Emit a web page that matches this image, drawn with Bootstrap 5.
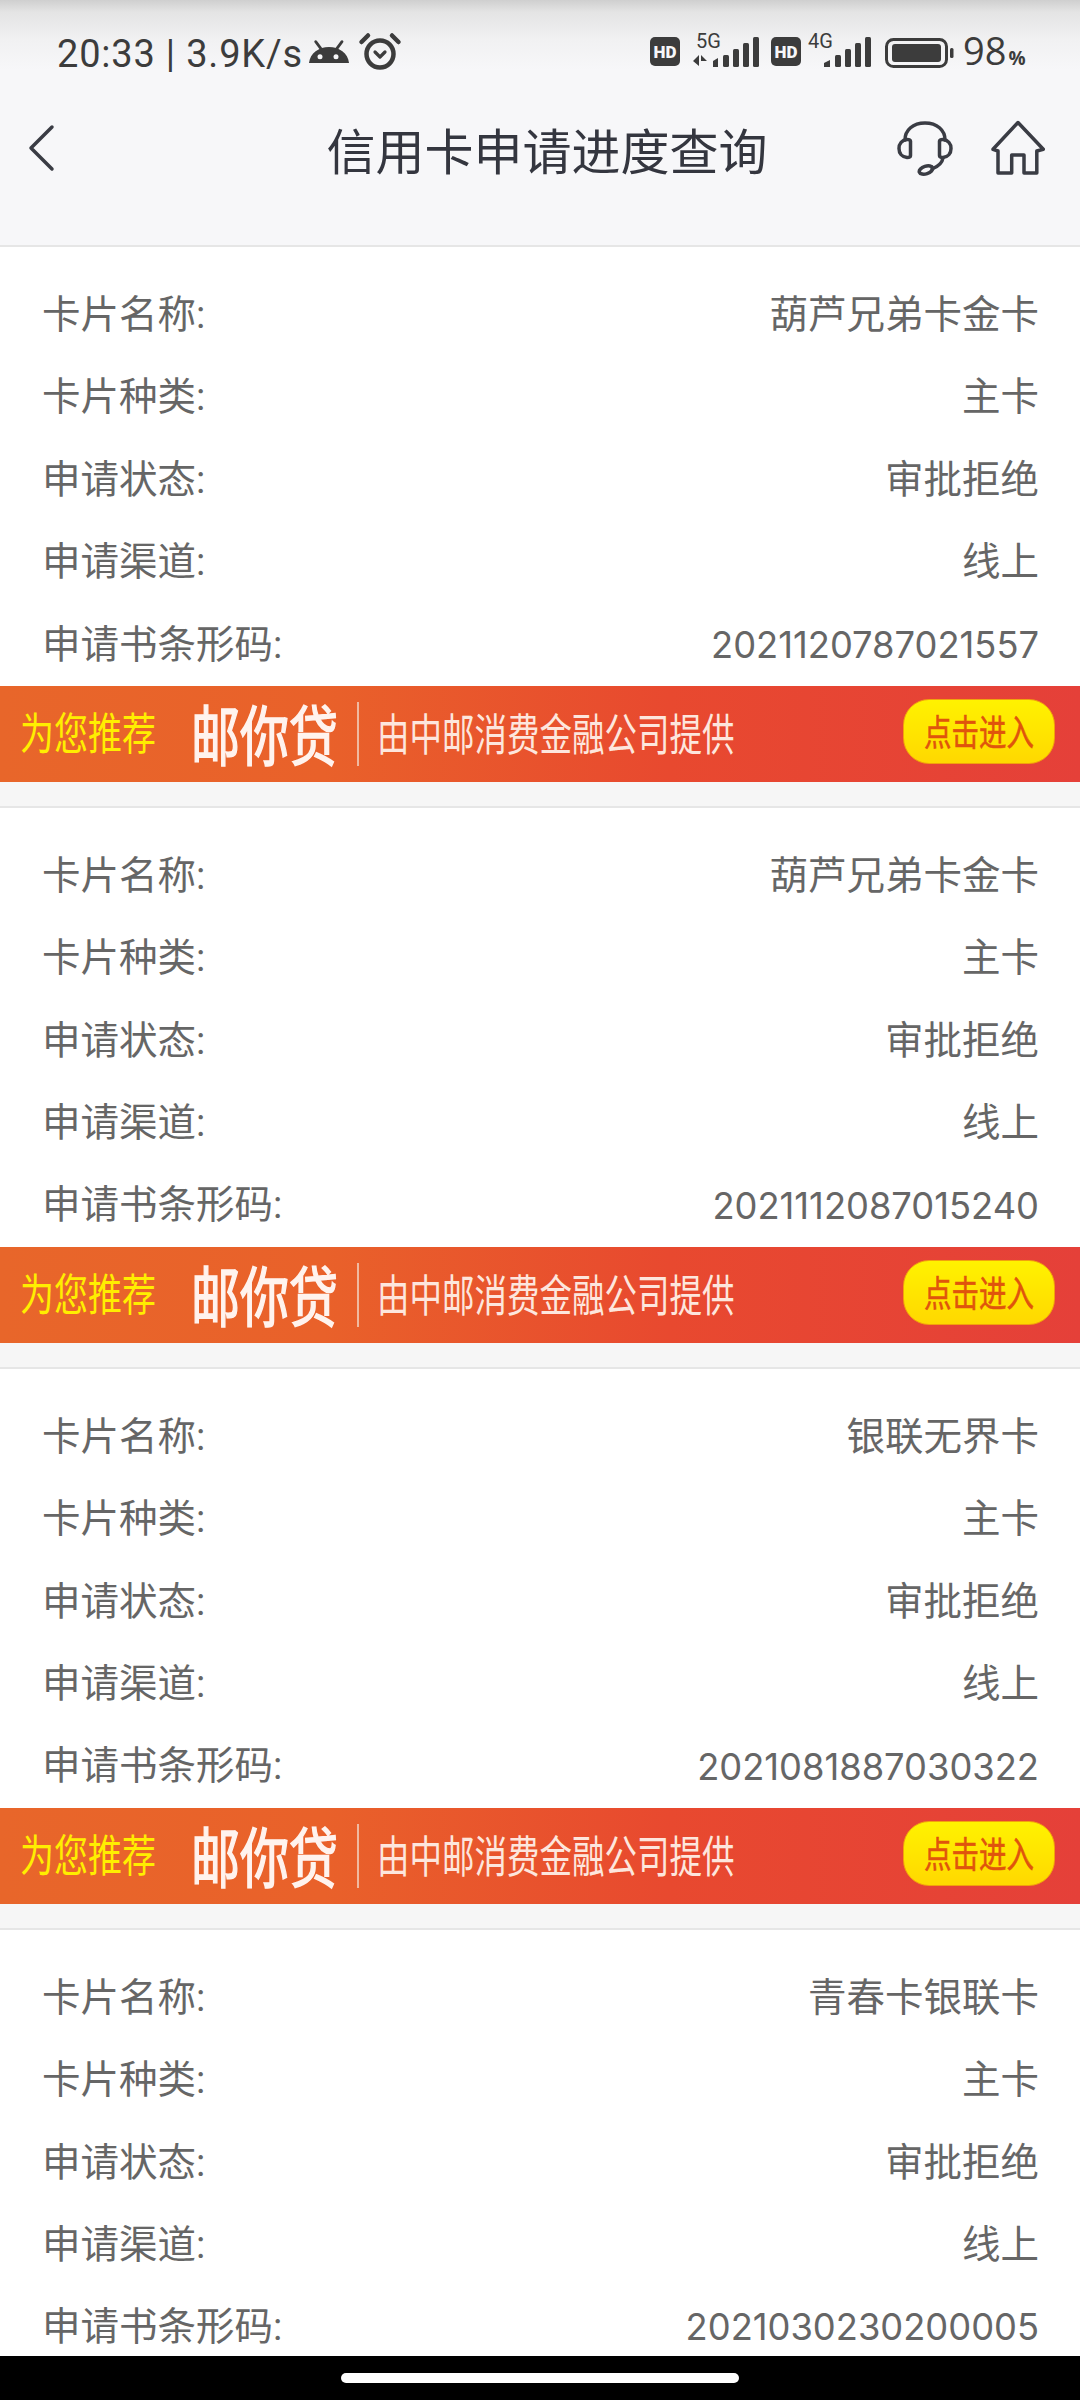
<!DOCTYPE html>
<html lang="zh-CN">
<head>
<meta charset="utf-8">
<title>信用卡申请进度查询</title>
<link href="https://cdn.jsdelivr.net/npm/bootstrap@5.3.0/dist/css/bootstrap.min.css" rel="stylesheet">
<style>
html,body{width:1080px;height:2400px;overflow:hidden;}
body{background:#f6f6f6;font-family:Roboto,"Noto Sans CJK SC",sans-serif;color:#666;position:relative;}
.app-head{height:245px;background:linear-gradient(#cfcfcf 0,#e4e4e4 12px,#f1f1f2 40px,#f7f7f9 70px);border-bottom:2px solid #e6e6e6;box-sizing:content-box;}
.stat-row{height:98px;padding:8px 42px 0 57px;color:#3c3c3c;}
.stat-left{font-size:38px;line-height:1;margin-top:1px;letter-spacing:.8px;white-space:nowrap;}
.stat-row svg{display:block;flex:none;}
.icons-a{margin-left:6px;}
.icons-b{margin-left:auto;}
.icons-c{margin-left:11px;}
.batt-txt{font-size:38px;line-height:1;width:75px;margin-left:9px;white-space:nowrap;margin-top:-6px;font-family:"Open Sans",sans-serif;}
.batt-txt small{font-size:19px;font-weight:700;margin-left:2px;}
.nav-row{height:100px;}
.nav-l{width:197px;padding-left:28px;}
.nav-r{width:183px;}
.nav-title{font-size:49px;line-height:1;color:#34363f;white-space:nowrap;font-family:"Noto Sans CJK SC",sans-serif;}
.nav-row svg{display:block;}
.rec{background:#fff;border-bottom:2px solid #e6e6e6;}
.rec-list{padding-top:27px;background:#fff;}
.rec-line{height:82.4px;padding:0 41px 0 42px;font-size:38.5px;line-height:1;color:#666;}
.digits{font-family:Inter,Roboto,sans-serif;font-size:36.3px;}
.promo-bar{height:96px;background:linear-gradient(90deg,#e8662a 0,#e9612a 30%,#e8492f 62%,#e54039 100%);padding-left:20px;overflow:hidden;}
.rec-gap{height:24px;background:#f6f6f6;}
.stretch{display:inline-block;font-family:"Noto Sans CJK SC",sans-serif;line-height:1;white-space:nowrap;}
.p-a{font-size:34px;color:#ffee00;transform:translateY(-2px) scaleY(1.3);}
.p-b{font-size:49px;color:#fff3ee;-webkit-text-stroke:1.2px #fff3ee;transform:translateY(-2px) scaleY(1.33);margin-left:35px;}
.p-sep{width:2px;height:64px;background:#f0b9a0;margin-left:19px;}
.p-c{font-size:32.5px;color:#fde6dd;transform:translateY(-2px) scaleY(1.38);margin-left:18px;}
.p-btn{margin-left:auto;margin-right:25px;width:152px;height:65px;border-radius:26px;background:linear-gradient(#fff200,#ffd800);border:1.5px solid #f2a20c;margin-top:-4px;}
.p-btn .stretch{font-size:27.5px;color:#e0540c;-webkit-text-stroke:.4px #e0540c;transform:translateY(-1px) scaleY(1.32);}
.sys-bar{height:44px;background:#000;left:0;right:0;bottom:0;}
.sys-pill{width:398px;height:10px;background:#fff;border-radius:5px;margin-top:17px;}
</style>
</head>
<body>
<header class="app-head d-flex flex-column">
  <div class="stat-row d-flex align-items-center">
    <div class="stat-left">20:33 | 3.9K/s</div>
    <svg class="icons-a" width="94" height="44" viewBox="0 0 94 44" aria-hidden="true">
      <path d="M0 32C1 22 10 16 20 16S39 22 40 32z" fill="#3c3c3c"/>
      <path d="M6.700 10.700 11.700 17.300M33 10.700 28 17.300" stroke="#3c3c3c" stroke-width="2.800" stroke-linecap="round" fill="none"/>
      <circle cx="11" cy="25.700" r="2.500" fill="#f7f7f9"/><circle cx="27" cy="25.700" r="2.500" fill="#f7f7f9"/>
      <g fill="none" stroke="#3c3c3c" transform="translate(51 0)">
        <circle cx="20" cy="23" r="13.500" stroke-width="4.500"/>
        <path d="M1.500 11 8 4.500M38.500 11 32 4.500" stroke-width="4.500" stroke-linecap="round"/>
        <path d="M15 21l5 5 5-5" stroke-width="3.200" stroke-linecap="round" stroke-linejoin="round"/>
      </g>
    </svg>
    <svg class="icons-b" width="223" height="60" viewBox="650 23 223 60" aria-hidden="true">
      <g fill="#3c3c3c">
        <rect x="650" y="37" width="30" height="29" rx="5"/>
        <rect x="771" y="37" width="30" height="29" rx="5"/>
        <path d="M699 55v11l-6-5zM701 55l6 6h-6z"/>
        <path d="M709 61l5-3v9h-5z" transform="translate(4 0)"/>
        <rect x="723" y="55" width="6" height="12" rx="1.500"/><rect x="733" y="49" width="6" height="18" rx="1.500"/><rect x="743" y="43" width="6" height="24" rx="1.500"/><rect x="753" y="37" width="6" height="30" rx="1.500"/>
        <path d="M824 67v-4l6-3v7z"/>
        <rect x="835" y="55" width="6" height="12" rx="1.500"/><rect x="845" y="49" width="6" height="18" rx="1.500"/><rect x="855" y="43" width="6" height="24" rx="1.500"/><rect x="865" y="37" width="6" height="30" rx="1.500"/>
        <text x="696" y="48" font-family="Roboto,sans-serif" font-size="20">5G</text>
        <text x="808" y="48" font-family="Roboto,sans-serif" font-size="20">4G</text>
      </g>
      <g fill="#f7f7f9" font-family="Roboto,sans-serif" font-size="17" font-weight="900" text-anchor="middle">
        <text x="665" y="57.500">HD</text><text x="786" y="57.500">HD</text>
      </g>
    </svg>
    <svg class="icons-c" width="70" height="32" viewBox="884 36 70 32" aria-hidden="true">
      <rect x="886.500" y="38.500" width="60" height="27" rx="7" fill="none" stroke="#3c3c3c" stroke-width="3"/>
      <rect x="892" y="43" width="49" height="18" rx="3" fill="#3c3c3c"/>
      <rect x="950" y="47" width="3.500" height="10" rx="1.500" fill="#3c3c3c"/>
    </svg>
    <div class="batt-txt">98<small>%</small></div>
  </div>
  <div class="nav-row d-flex align-items-center">
    <div class="nav-l">
      <svg width="28" height="48" viewBox="0 0 28 48" aria-hidden="true"><path d="M24 3 3 24l21 21" fill="none" stroke="#3a3c44" stroke-width="3.500" stroke-linecap="round" stroke-linejoin="round"/></svg>
    </div>
    <div class="flex-grow-1 text-center nav-title">信用卡申请进度查询</div>
    <div class="nav-r d-flex">
      <svg width="148" height="56" viewBox="897 120 148 56" aria-hidden="true">
        <g fill="none" stroke="#3a3c44" stroke-width="3.500" stroke-linejoin="round" stroke-linecap="round">
          <path d="M905 140c0-10 8-17 20-17s20 7 20 17"/>
          <path d="M907 139.500c-5 .5-8 4-8 9s3 8.500 8 9c2 0 3.500-.5 3.500-2v-14.500c0-1-1.500-1.700-3.500-1.500z"/>
          <path d="M943 139.500c5 .5 8 4 8 9s-3 8.500-8 9c-2 0-3.500-.5-3.500-2v-14.500c0-1 1.500-1.700 3.500-1.500z"/>
          <path d="M943 158c-1 6-6 9-11 11"/>
          <ellipse cx="926" cy="170" rx="7" ry="3.800" transform="rotate(-18 926 170)"/>
          <path d="M993 149.300 1018 122.500l25.300 26.800-6.500 1.700V173h-12.800v-18h-12.300v18H998v-22z"/>
        </g>
      </svg>
    </div>
  </div>
</header>

<main>
  <section class="rec">
    <div class="rec-list">
      <div class="rec-line d-flex justify-content-between align-items-center"><span>卡片名称:</span><span>葫芦兄弟卡金卡</span></div>
      <div class="rec-line d-flex justify-content-between align-items-center"><span>卡片种类:</span><span>主卡</span></div>
      <div class="rec-line d-flex justify-content-between align-items-center"><span>申请状态:</span><span>审批拒绝</span></div>
      <div class="rec-line d-flex justify-content-between align-items-center"><span>申请渠道:</span><span>线上</span></div>
      <div class="rec-line d-flex justify-content-between align-items-center"><span>申请书条形码:</span><span class="digits">2021120787021557</span></div>
    </div>
    <div class="promo-bar d-flex align-items-center"><span class="stretch p-a">为您推荐</span><span class="stretch p-b">邮你贷</span><span class="p-sep"></span><span class="stretch p-c">由中邮消费金融公司提供</span><span class="p-btn d-flex align-items-center justify-content-center"><span class="stretch">点击进入</span></span></div>
    <div class="rec-gap"></div>
  </section>
  <section class="rec">
    <div class="rec-list">
      <div class="rec-line d-flex justify-content-between align-items-center"><span>卡片名称:</span><span>葫芦兄弟卡金卡</span></div>
      <div class="rec-line d-flex justify-content-between align-items-center"><span>卡片种类:</span><span>主卡</span></div>
      <div class="rec-line d-flex justify-content-between align-items-center"><span>申请状态:</span><span>审批拒绝</span></div>
      <div class="rec-line d-flex justify-content-between align-items-center"><span>申请渠道:</span><span>线上</span></div>
      <div class="rec-line d-flex justify-content-between align-items-center"><span>申请书条形码:</span><span class="digits">2021112087015240</span></div>
    </div>
    <div class="promo-bar d-flex align-items-center"><span class="stretch p-a">为您推荐</span><span class="stretch p-b">邮你贷</span><span class="p-sep"></span><span class="stretch p-c">由中邮消费金融公司提供</span><span class="p-btn d-flex align-items-center justify-content-center"><span class="stretch">点击进入</span></span></div>
    <div class="rec-gap"></div>
  </section>
  <section class="rec">
    <div class="rec-list">
      <div class="rec-line d-flex justify-content-between align-items-center"><span>卡片名称:</span><span>银联无界卡</span></div>
      <div class="rec-line d-flex justify-content-between align-items-center"><span>卡片种类:</span><span>主卡</span></div>
      <div class="rec-line d-flex justify-content-between align-items-center"><span>申请状态:</span><span>审批拒绝</span></div>
      <div class="rec-line d-flex justify-content-between align-items-center"><span>申请渠道:</span><span>线上</span></div>
      <div class="rec-line d-flex justify-content-between align-items-center"><span>申请书条形码:</span><span class="digits">2021081887030322</span></div>
    </div>
    <div class="promo-bar d-flex align-items-center"><span class="stretch p-a">为您推荐</span><span class="stretch p-b">邮你贷</span><span class="p-sep"></span><span class="stretch p-c">由中邮消费金融公司提供</span><span class="p-btn d-flex align-items-center justify-content-center"><span class="stretch">点击进入</span></span></div>
    <div class="rec-gap"></div>
  </section>
  <section class="rec">
    <div class="rec-list">
      <div class="rec-line d-flex justify-content-between align-items-center"><span>卡片名称:</span><span>青春卡银联卡</span></div>
      <div class="rec-line d-flex justify-content-between align-items-center"><span>卡片种类:</span><span>主卡</span></div>
      <div class="rec-line d-flex justify-content-between align-items-center"><span>申请状态:</span><span>审批拒绝</span></div>
      <div class="rec-line d-flex justify-content-between align-items-center"><span>申请渠道:</span><span>线上</span></div>
      <div class="rec-line d-flex justify-content-between align-items-center"><span>申请书条形码:</span><span class="digits">2021030230200005</span></div>
    </div>
  </section>
</main>

<div class="sys-bar position-fixed d-flex justify-content-center"><div class="sys-pill"></div></div>
<script src="https://cdn.jsdelivr.net/npm/bootstrap@5.3.0/dist/js/bootstrap.bundle.min.js"></script>
</body>
</html>
